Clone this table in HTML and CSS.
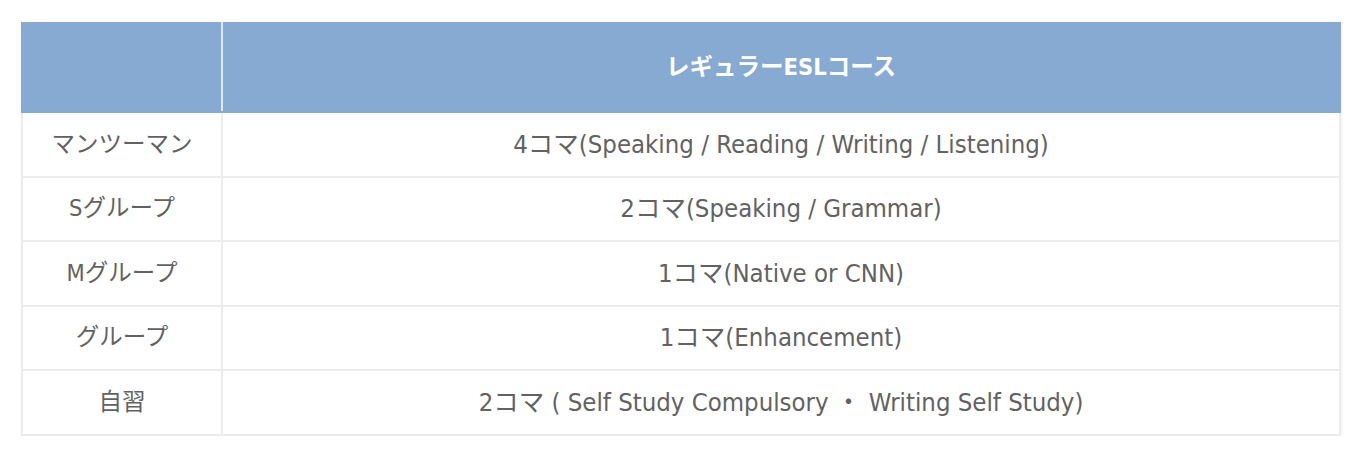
FILE: index.html
```html
<!DOCTYPE html>
<html lang="ja">
<head>
<meta charset="utf-8">
<link rel="stylesheet" href="styles.css">
</head>
<body>
<div class="wrap">
  <table class="course">
    <thead>
      <tr>
        <th class="c1"></th>
        <th class="c2"><span class="t">レギュラーESLコース</span></th>
      </tr>
    </thead>
    <tbody>
      <tr class="r1"><td class="c1"><span class="t">マンツーマン</span></td><td class="c2"><span class="t">4コマ(Speaking / Reading / Writing / Listening)</span></td></tr>
      <tr class="r2"><td class="c1"><span class="t">Sグループ</span></td><td class="c2"><span class="t">2コマ(Speaking / Grammar)</span></td></tr>
      <tr class="r1"><td class="c1"><span class="t">Mグループ</span></td><td class="c2"><span class="t">1コマ(Native or CNN)</span></td></tr>
      <tr class="r2"><td class="c1"><span class="t">グループ</span></td><td class="c2"><span class="t">1コマ(Enhancement)</span></td></tr>
      <tr class="r1"><td class="c1"><span class="t">自習</span></td><td class="c2"><span class="t">2コマ ( Self Study Compulsory ・ Writing Self Study)</span></td></tr>
    </tbody>
  </table>
</div>
</body>
</html>
```
FILE: styles.css
```css
html, body {
  margin: 0;
  padding: 0;
  background: #ffffff;
}
.wrap {
  padding: 22px 0 0 21px;
}
.course {
  width: 1320px;
  border-collapse: collapse;
  table-layout: fixed;
  font-family: "DejaVu Sans Condensed", "Noto Sans CJK JP", sans-serif;
  color: #626262;
  box-shadow: 1px 1px 3px rgba(0,0,0,0.06);
}
.course th, .course td {
  text-align: center;
  vertical-align: middle;
  padding: 0;
  border: 2px solid #ececec;
}
.course th {
  background: #87aad2;
  height: 87px;
  color: #ffffff;
  font-weight: 700;
  font-size: 23.5px;
  border-color: #87aad2;
}
.course th.c1 {
  border-right: 2px solid #dfe7f1;
}
.course th.c2 {
  border-left: 2px solid #dfe7f1;
}
.course .c1 {
  width: 198px;
}
.course td {
  font-size: 25.5px;
  font-weight: 400;
}
.course td.c1 {
  font-size: 23.5px;
}
.course tr.r1 td { height: 63px; }
.course tr.r2 td { height: 62px; }
.t {
  display: inline-block;
  line-height: 1;
  position: relative;
  top: -1px;
}
```
